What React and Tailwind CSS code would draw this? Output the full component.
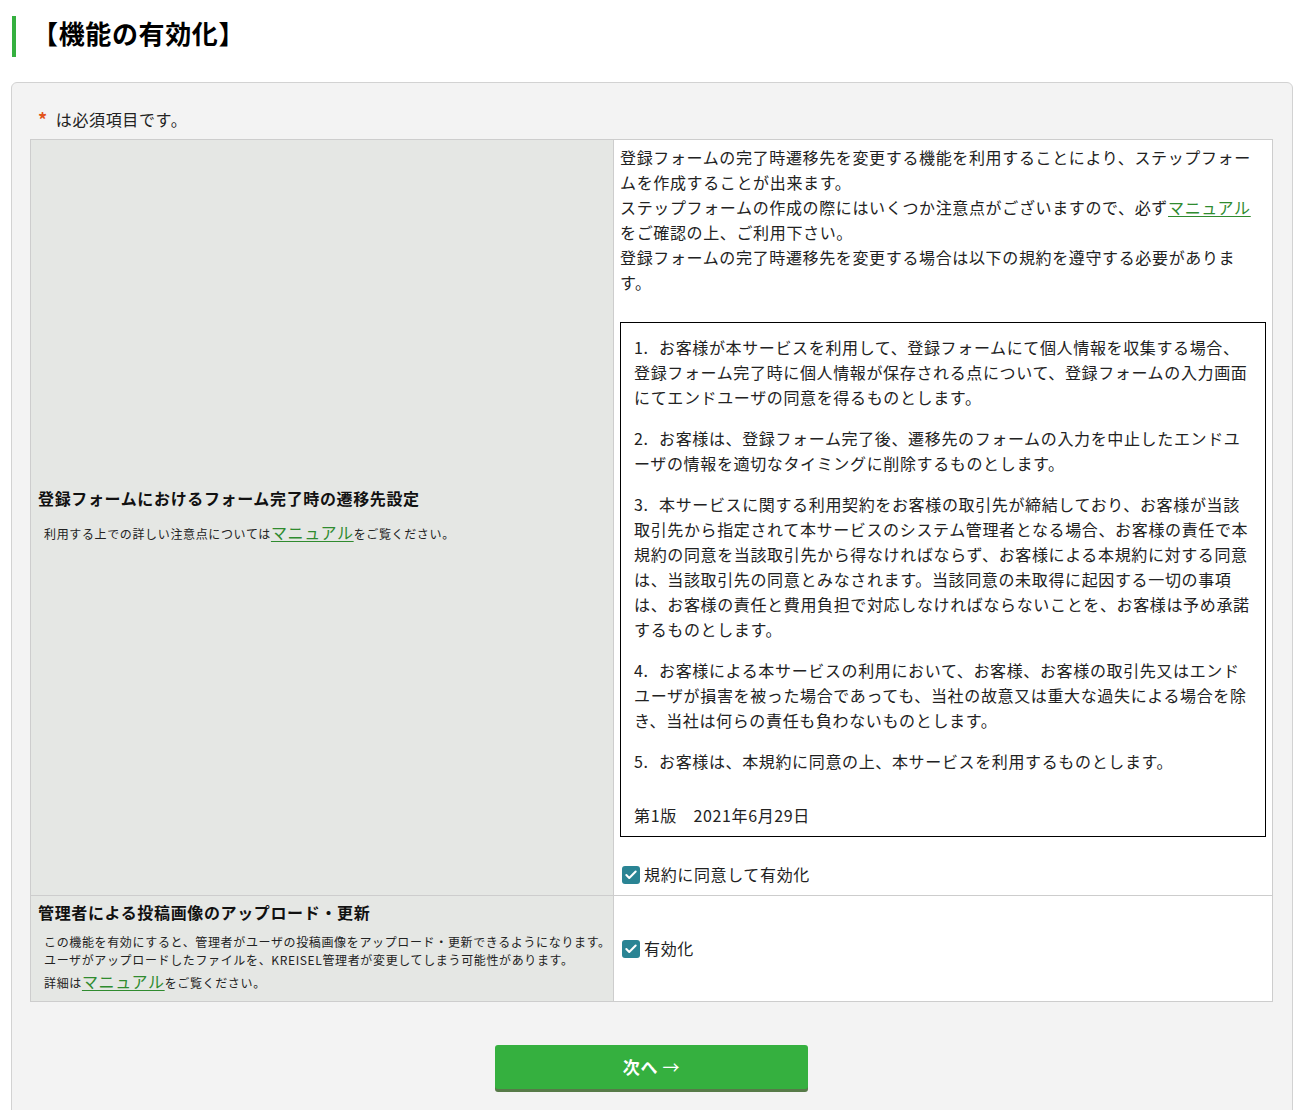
import { Check } from 'lucide-react'

const Manual = () => (
    <a href="#" className="text-[16px] text-[#2f8b2f] underline underline-offset-2">マニュアル</a>
)

const Checked = ({ label }) => (
    <label className="flex items-center gap-[4px] pl-[2px] text-[16px] leading-[25px] text-[#222]">
        <span className="inline-flex h-[18px] w-[18px] items-center justify-center rounded-[3px] bg-[#2a8494]">
            <Check className="h-[14px] w-[14px] text-white" strokeWidth={3.5} />
        </span>
        {label}
    </label>
)

const terms = [
    'お客様が本サービスを利用して、登録フォームにて個人情報を収集する場合、登録フォーム完了時に個人情報が保存される点について、登録フォームの入力画面にてエンドユーザの同意を得るものとします。',
    'お客様は、登録フォーム完了後、遷移先のフォームの入力を中止したエンドユーザの情報を適切なタイミングに削除するものとします。',
    '本サービスに関する利用契約をお客様の取引先が締結しており、お客様が当該取引先から指定されて本サービスのシステム管理者となる場合、お客様の責任で本規約の同意を当該取引先から得なければならず、お客様による本規約に対する同意は、当該取引先の同意とみなされます。当該同意の未取得に起因する一切の事項は、お客様の責任と費用負担で対応しなければならないことを、お客様は予め承諾するものとします。',
    'お客様による本サービスの利用において、お客様、お客様の取引先又はエンドユーザが損害を被った場合であっても、当社の故意又は重大な過失による場合を除き、当社は何らの責任も負わないものとします。',
    'お客様は、本規約に同意の上、本サービスを利用するものとします。'
]

const App = () => {
    return (
        <div className="min-h-screen bg-white pb-10 tracking-[0.04em] text-[#222]" style={{ fontFamily: '"Noto Sans CJK JP", "Noto Sans", sans-serif' }}>
            {/* page title */}
            <div className="ml-3 mt-4 flex h-[41px] items-center border-l-4 border-[#35b03f] pb-[7px] pl-4">
                <h1 className="text-[26px] font-bold leading-none text-black">【機能の有効化】</h1>
            </div>

            <div className="ml-[11px] mr-[12px] mt-[25px] rounded-md border border-[#d2d2d2] bg-[#f3f3f3] pb-16 pl-[18px] pr-[19px] pt-[24px]">
                <p className="mb-[7px] flex items-center pl-[8px] text-[16px] leading-[25px]">
                    <span className="mr-[8px] text-[18px] font-bold text-[#e2541a]">*</span>は必須項目です。
                </p>

                <div className="grid grid-cols-[583px_1fr] border border-[#cdcdcd] bg-white">
                    {/* row 1 */}
                    <div className="flex flex-col justify-center border-b border-r border-[#cdcdcd] bg-[#e5e7e4] pb-[6px] pl-[7px]">
                        <div className="text-[16px] font-bold leading-[25px] text-[#111]">登録フォームにおけるフォーム完了時の遷移先設定</div>
                        <div className="mt-[12px] pl-[6px] text-[12px] leading-[18px]">
                            利用する上での詳しい注意点については<Manual />をご覧ください。
                        </div>
                    </div>
                    <div className="border-b border-[#cdcdcd] px-[6px] pb-[8px] pt-[5px] text-[16px] leading-[25px]">
                        <p className="pr-[8px]">
                            登録フォームの完了時遷移先を変更する機能を利用することにより、ステップフォームを作成することが出来ます。<br />
                            ステップフォームの作成の際にはいくつか注意点がございますので、必ず<Manual />をご確認の上、ご利用下さい。<br />
                            登録フォームの完了時遷移先を変更する場合は以下の規約を遵守する必要があります。
                        </p>

                        <div className="mt-[27px] border border-black px-[13px] pb-[8px] pt-[12px]">
                            {terms.map((t, i) => (
                                <p key={i} className="mb-[16px]">
                                    <span className="inline-block w-[25px]">{i + 1}.</span>{t}
                                </p>
                            ))}
                            <p className="mt-[29px]">第1版　2021年6月29日</p>
                        </div>

                        <div className="mt-[25px]">
                            <Checked label="規約に同意して有効化" />
                        </div>
                    </div>

                    {/* row 2 */}
                    <div className="border-r border-[#cdcdcd] bg-[#e5e7e4] pb-[9px] pl-[7px] pt-[4px]">
                        <div className="text-[16px] font-bold leading-[25px] text-[#111]">管理者による投稿画像のアップロード・更新</div>
                        <div className="mt-[8px] pl-[6px] text-[12px] leading-[18px]">
                            <p className="whitespace-nowrap">
                                この機能を有効にすると、管理者がユーザの投稿画像をアップロード・更新できるようになります。<br />
                                ユーザがアップロードしたファイルを、KREISEL管理者が変更してしまう可能性があります。
                            </p>
                            <p className="mt-[3px]">詳細は<Manual />をご覧ください。</p>
                        </div>
                    </div>
                    <div className="flex items-center px-[6px]">
                        <Checked label="有効化" />
                    </div>
                </div>

                <div className="mt-[43px] flex justify-center">
                    <button className="h-[44px] w-[313px] rounded-[3px] bg-[#35b03f] text-[17px] font-bold text-white shadow-[0_3px_0_#567a48]">
                        次へ <span className="font-normal">→</span>
                    </button>
                </div>
            </div>
        </div>
    )
}

export default App
